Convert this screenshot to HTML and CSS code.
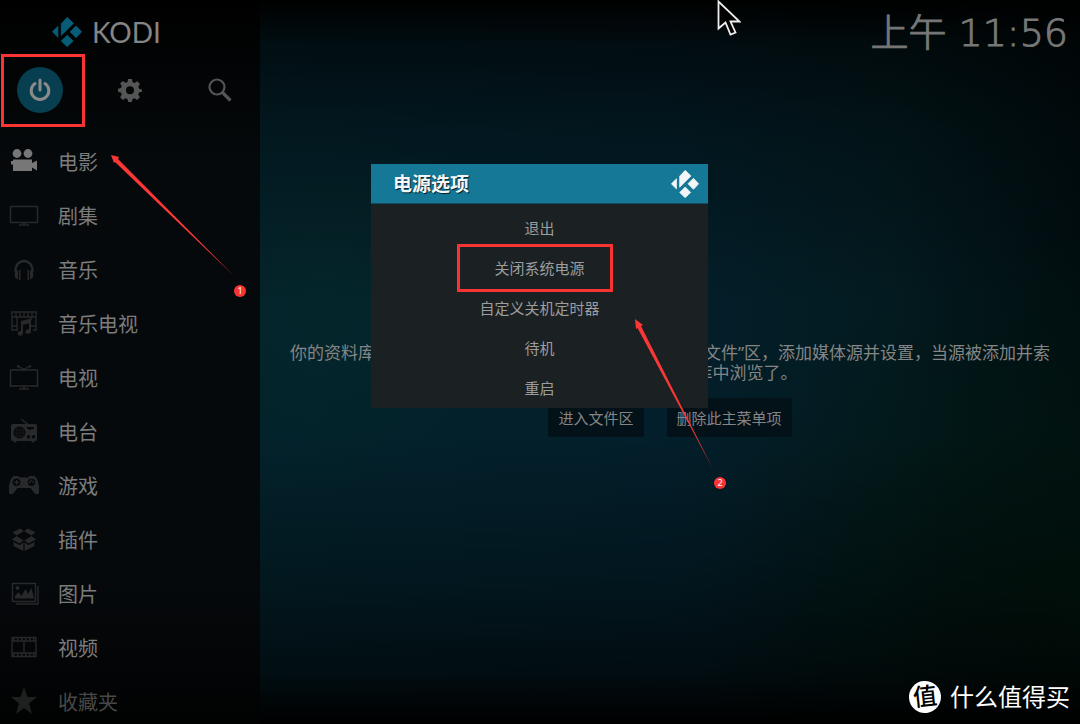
FILE: index.html
```html
<!DOCTYPE html>
<html lang="zh-CN">
<head>
<meta charset="utf-8">
<title>Kodi</title>
<link rel="stylesheet" href="styles.css">
</head>
<body>
<svg class="defs" aria-hidden="true">
  <symbol id="kodi" viewBox="0 0 81 81"><path d="M25 18 41 1 58 17 25 50ZM1 40 16 25V55ZM65 24 80 40 65 56 49 40ZM41 49 57 65 41 80 25 65Z" stroke="currentColor" stroke-width="2" stroke-linejoin="round"/></symbol>
</svg>
<div class="app">
  <aside class="sidebar">
    <div class="brand"><svg class="brand-mark" aria-hidden="true"><use href="#kodi"/></svg><span class="brand-name">KODI</span></div>
    <div class="tools">
      <button class="tool tool-power" aria-label="电源">
        <svg viewBox="0 0 24 24" class="tool-icon"><path fill="none" stroke="currentColor" stroke-width="3" stroke-linecap="round" d="M12 2v10M7 5.500a8.800 8.800 0 1 0 10 0"/></svg>
      </button>
      <button class="tool" aria-label="设置">
        <svg viewBox="0 0 24 24" class="tool-icon"><path fill-rule="evenodd" d="M10 1h4l.6 3.200 2 .9 2.800-1.800 2.600 2.800-1.700 2.700.8 2L24 11.500v2.200l-3 .7-.8 2 1.700 2.800-2.700 2.700-2.700-1.700-2 .8L13.800 24h-3.600l-.7-3-2-.8-2.700 1.700-2.700-2.700 1.700-2.800-.8-2-3-.7v-3l3-.6.8-2L2.100 5.600l2.700-2.500 2.700 1.700 2-.8ZM12 8.300a4 4 0 1 0 0 8 4 4 0 0 0 0-8Z"/></svg>
      </button>
      <button class="tool" aria-label="搜索">
        <svg viewBox="0 0 24 24" class="tool-icon"><circle cx="9" cy="9" r="7.500" fill="none" stroke="currentColor" stroke-width="2.200"/><path fill="none" stroke="currentColor" stroke-width="3.200" d="m14.500 14.500 8 8"/></svg>
      </button>
    </div>
    <nav class="menu">
      <a class="item item-active" href="#movies"><svg class="icon" viewBox="0 0 30 30"><circle cx="8" cy="7.500" r="4.400"/><circle cx="19" cy="7.500" r="4.400"/><path d="M4 13.500h19v3.500l5-2.500v10l-5-3V25H4v-6.500H2V15h2Z"/></svg><span>电影</span></a>
      <a class="item" href="#shows"><svg class="icon" viewBox="0 0 30 30"><path fill="none" stroke="currentColor" stroke-width="1.400" d="M1.500 6.500h27v16h-27ZM10 25h10"/><path d="M13 24l2-1.500 2 1.500Z"/></svg><span>剧集</span></a>
      <a class="item" href="#music"><svg class="icon" viewBox="0 0 30 30"><path fill="none" stroke="currentColor" stroke-width="2.400" d="M6.500 18v-2a8.500 9 0 0 1 17 0v2"/><path d="M9 16v9.500a5 5 0 0 1 0-9.500ZM10 16h1.500v10H10ZM21 16v9.500a5 5 0 0 0 0-9.500ZM18.500 16H20v10h-1.500Z"/></svg><span>音乐</span></a>
      <a class="item" href="#music-videos"><svg class="icon" viewBox="0 0 30 30"><path fill="none" stroke="currentColor" stroke-width="1.400" d="M9 22H3V4h24v18h-3M3 9h24M7 4v5M11 4v5M15 4v5M19 4v5M23 4v5M8 9v13M22 9v3M3 18h5M22 18h5"/><path d="M12 13l10-2.500v13a2.700 2.300 0 1 1-2-2.200v-6l-6 1.500v8.500a2.700 2.300 0 1 1-2-2.200Z"/></svg><span>音乐电视</span></a>
      <a class="item" href="#tv"><svg class="icon" viewBox="0 0 30 30"><path fill="none" stroke="currentColor" stroke-width="1.400" d="M1.500 8h27v16h-27ZM10 27h10M9.500 4.500 15 7.500l5.500-3"/><circle cx="9" cy="4.300" r="1.200"/><circle cx="21" cy="4.300" r="1.200"/><path d="M13 26.500 15 24l2 2.500Z"/></svg><span>电视</span></a>
      <a class="item" href="#radio"><svg class="icon" viewBox="0 0 30 30"><path fill-rule="evenodd" d="M4 8h22a2 2 0 0 1 2 2v13a2 2 0 0 1-2 2l-2 2-2-2H8l-2 2-2-2a2 2 0 0 1-2-2V10a2 2 0 0 1 2-2ZM10.500 10.500a6 6 0 1 0 0 12 6 6 0 0 0 0-12ZM18 11v2h2v1h2v-1h3v-2ZM19.500 19a1.700 1.700 0 1 0 0 3.400 1.700 1.700 0 0 0 0-3.400ZM24.500 19a1.700 1.700 0 1 0 0 3.400 1.700 1.700 0 0 0 0-3.400Z"/><path fill="none" stroke="currentColor" stroke-width="1.400" d="M12 3l7 5.500"/><path fill="none" stroke="currentColor" stroke-width=".4" d="M5 14h11M5 17h11M5 20h11M8 11v11M11 11v11M14 11v11"/></svg><span>电台</span></a>
      <a class="item" href="#games"><svg class="icon" viewBox="0 0 30 30"><path fill-rule="evenodd" d="M5 6h4l2 1.500h8L21 6h4c3 1 5 7 5.500 15 0 4-4 4.500-6 1l-3-4h-13l-3 4c-2 3.500-6 3-6-1C0 13 2 7 5 6ZM7.500 8.500a3.800 3.800 0 1 0 0 7.600 3.800 3.800 0 0 0 0-7.600ZM22.500 8.500a3.800 3.800 0 1 0 0 7.600 3.800 3.800 0 0 0 0-7.600Z"/><path d="M7 10h1.300v1.700H10V13H8.300v1.700H7V13H5.300v-1.300H7Z"/><circle cx="22.500" cy="10.500" r="1"/><circle cx="20.700" cy="12.300" r="1"/><circle cx="24.300" cy="12.300" r="1"/></svg><span>游戏</span></a>
      <a class="item" href="#addons"><svg class="icon" viewBox="0 0 30 30"><path d="M11 4.500 15 7l-7.500 4.500L3.500 8.500ZM19 4.500 15 7l7.500 4.500 4-3ZM3 15.500l4.500-3.500 7 4.500-4 3ZM27 15.500 22.500 12l-7 4.500 4 3ZM4.500 18l6 3.300 3.900-3V27l-9.900-5ZM25.500 18l-6 3.300-3.900-3V27l9.900-5Z"/></svg><span>插件</span></a>
      <a class="item" href="#pictures"><svg class="icon" viewBox="0 0 30 30"><path fill="none" stroke="currentColor" stroke-width="1.400" d="M3.500 5.500h23v18h-23ZM7 26h22V8"/><circle cx="8.500" cy="10" r="2"/><path d="M6 20.500V18l3.500-4 3 4 4-7 2.500 5 3.500-6 2.500 10.500Z"/></svg><span>图片</span></a>
      <a class="item" href="#videos"><svg class="icon" viewBox="0 0 30 30"><path fill="none" stroke="currentColor" stroke-width="1.400" d="M3 5.500h24v19H3ZM3 9h24M3 21h24M15 9v12"/><path fill="none" stroke="currentColor" stroke-width="3" stroke-dasharray="1.500 2.500" d="M4 7.200h23M4 22.800h23"/></svg><span>视频</span></a>
      <a class="item item-faded" href="#favourites"><svg class="icon" viewBox="0 0 30 30"><path d="m15 1 3.500 10H28l-8 6.500L23 28l-8-6-8 6 3-10.500L2 11h9.500Z"/></svg><span>收藏夹</span></a>
    </nav>
  </aside>

  <main class="main">
    <header class="topbar"><time class="clock" datetime="11:56">上午 11:56</time></header>
    <section class="empty">
      <p class="message">你的资料库目前是空的。要填充你的个人媒体，请进入“文件”区，添加媒体源并设置，当源被添加并索引后，您便可在资料库中浏览了。</p>
      <div class="actions">
        <button class="action">进入文件区</button>
        <button class="action">删除此主菜单项</button>
      </div>
    </section>
  </main>
</div>

<div class="dialog" role="dialog" aria-labelledby="dialog-title">
  <div class="dialog-head">
    <h2 class="dialog-title" id="dialog-title">电源选项</h2>
    <svg class="dialog-mark" aria-hidden="true"><use href="#kodi"/></svg>
  </div>
  <div class="dialog-body">
    <button class="option">退出</button>
    <button class="option option-marked">关闭系统电源</button>
    <button class="option">自定义关机定时器</button>
    <button class="option">待机</button>
    <button class="option">重启</button>
  </div>
  <svg class="arrow arrow-two" viewBox="0 0 78 150" aria-hidden="true"><path d="M0 0 8 6 6 7 78 150 2.500 9 1 10Z"/></svg>
  <span class="step step-two">2</span>
</div>

<svg class="arrow arrow-one" viewBox="0 0 122 120" aria-hidden="true"><path d="M0 0 8 2 7 4 122 120 4 7 3 8Z"/></svg>
<span class="step step-one">1</span>

<svg class="pointer" viewBox="0 0 24 37" aria-hidden="true"><path d="M1.500 1.500v27l7-6 5 12 5-2-5-11h9Z" fill="#000" stroke="#eee" stroke-width="1.800"/></svg>

<div class="credit"><span class="credit-badge">值</span><span>什么值得买</span></div>
</body>
</html>
```

FILE: styles.css
```css
* { box-sizing: border-box; }

body {
  margin: 0;
  position: relative;
  height: 100vh;
  overflow: hidden;
  background: #000;
  color: #858585;
  font-family: "Noto Sans", "Noto Sans CJK SC", sans-serif;
}

button {
  border: 0;
  padding: 0;
  background: none;
  color: inherit;
  font: inherit;
}

svg { fill: currentColor; }

.defs { position: absolute; width: 0; height: 0; }

.app {
  display: grid;
  grid-template-columns: 260px 1fr;
  height: 100%;
  background:
    linear-gradient(#000 0, rgba(0, 0, 0, .6) 6%, rgba(0, 0, 0, .3) 18%, transparent 42%, transparent 60%, rgba(0, 0, 0, .3) 80%, rgba(0, 0, 0, .6) 93%, #000 100%),
    radial-gradient(circle at 30% 42%, #04262a 0, transparent 22%),
    radial-gradient(circle at 100% 85%, #01160f 0, transparent 30%),
    linear-gradient(90deg, #03222c 24%, #031f2b 62%, #031b20 82%, #010e11 100%);
}

.sidebar {
  display: flex;
  flex-direction: column;
  overflow: hidden;
  background: linear-gradient(#000 0, #05090b 22%, #06090c 80%, #010202 100%);
}

.brand {
  display: flex;
  flex: none;
  align-items: center;
  gap: 10px;
  height: 64px;
  padding-left: 52px;
}

.brand-mark { width: 30px; height: 30px; color: #075d77; }

.brand-name {
  font-family: Lato, sans-serif;
  font-size: 28px;
  line-height: 32px;
}

.tools {
  display: flex;
  flex: none;
  justify-content: space-between;
  padding: 3px 17px 21px;
}

.tool {
  display: grid;
  place-items: center;
  width: 46px;
  height: 46px;
  border-radius: 50%;
  color: #555;
}

.tool-power { background: #083f50; color: #8b8b8b; }

.tool-icon { width: 24px; height: 24px; }

.menu { display: flex; flex: none; flex-direction: column; }

.item {
  display: flex;
  flex: none;
  align-items: center;
  gap: 19px;
  height: 54px;
  padding-left: 9px;
  color: #7c7c7c;
  font-size: 20px;
  text-decoration: none;
}

.icon { width: 30px; height: 30px; color: #27292a; }

.item-active .icon { color: #777; }

.item-faded { color: #484848; }

.item-faded .icon { color: #1e1f1f; }

.main { display: flex; flex-direction: column; }

.topbar {
  display: flex;
  justify-content: flex-end;
  height: 56px;
  padding: 9px 12px 0;
}

.clock {
  color: #777;
  font-family: "DejaVu Sans", "Noto Sans CJK SC", sans-serif;
  font-size: 38px;
  font-weight: 200;
  line-height: 48px;
  -webkit-text-stroke: 1px #777;
}

.empty {
  display: flex;
  flex: 1;
  flex-direction: column;
  align-items: center;
  justify-content: center;
  gap: 15px;
  padding: 0 24px;
}

.message {
  margin: 0;
  font-size: 17px;
  line-height: 20px;
  text-align: center;
}

.actions { display: flex; gap: 23px; }

.action {
  height: 39px;
  padding: 0 10px;
  border-radius: 3px;
  background: #031119;
  font-size: 15px;
}

.dialog {
  position: absolute;
  top: 164px;
  left: 50%;
  width: 337px;
  margin-left: -169px;
  background: #1b2022;
}

.dialog-head {
  display: flex;
  align-items: center;
  justify-content: space-between;
  height: 40px;
  padding: 0 9px 0 22px;
  border-bottom: 1px solid #0f4c5e;
  background: #157896;
  color: #f2f6f8;
}

.dialog-title {
  margin: 0;
  padding-bottom: 1px;
  font-size: 19px;
  font-weight: 700;
  text-shadow: 1px 1px 1px #04222d;
}

.dialog-mark { width: 28px; height: 28px; }

.dialog-body {
  display: flex;
  flex-direction: column;
  padding: 4px 0 0;
}

.option {
  position: relative;
  height: 40px;
  padding-bottom: 2px;
  color: #9b9d9e;
  font-size: 15px;
}

.option-marked::after,
.tool-power::after {
  position: absolute;
  border: 3px solid #fa3434;
  content: "";
}

.option-marked::after { inset: -4px 95px -4px 86px; }

.tool-power { position: relative; }

.tool-power::after { inset: -13px -22px -14px -16px; }

.arrow { position: absolute; fill: #fa3737; }

.arrow-one { top: 155px; left: 111px; width: 122px; height: 120px; }

.arrow-two { top: 155px; left: 264px; width: 78px; height: 150px; }

.step {
  position: absolute;
  width: 12px;
  height: 12px;
  border-radius: 50%;
  background: #fa3434;
  color: #fff;
  font-size: 9px;
  line-height: 12px;
  text-align: center;
}

.step-one { top: 285px; left: 234px; }

.step-two { top: 313px; left: 343px; }

.pointer { position: absolute; top: 0; left: 717px; width: 24px; height: 37px; }

.credit {
  position: absolute;
  right: 10px;
  bottom: 9px;
  display: flex;
  align-items: center;
  gap: 9px;
  color: #fff;
  font-size: 24px;
  line-height: 36px;
}

.credit-badge {
  width: 32px;
  height: 32px;
  border-radius: 50%;
  background: #fff;
  color: #000;
  font-size: 24px;
  font-weight: 500;
  line-height: 30px;
  text-align: center;
  transform: rotate(-6deg);
}
```
